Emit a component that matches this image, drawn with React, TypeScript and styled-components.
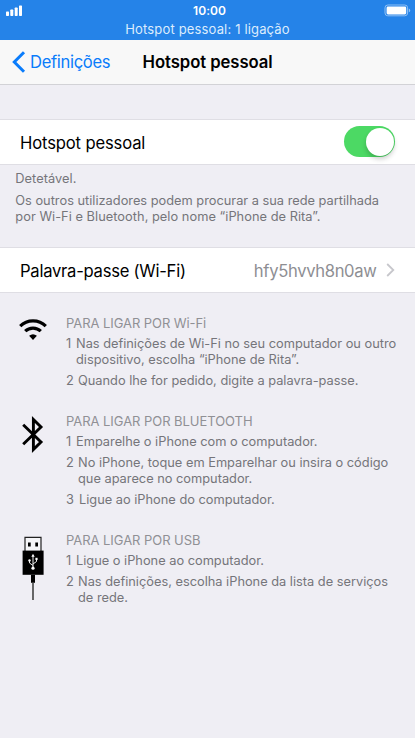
import React from 'react';
import styled, { createGlobalStyle } from 'styled-components';

const GlobalStyle = createGlobalStyle`
  * { box-sizing: border-box; }
  body { margin: 0; background: #efeef4; }
`;

const Screen = styled.div`
  width: 415px;
  height: 738px;
  overflow: hidden;
  display: flex;
  flex-direction: column;
  background: #efeef4;
  color: #000;
  font-family: Inter, 'Liberation Sans', sans-serif;
`;

const StatusBar = styled.header`
  height: 40px;
  flex: none;
  background: #2583e8;
  color: #fff;
`;

const StatusRow = styled.div`
  height: 20px;
  display: grid;
  grid-template-columns: 1fr auto 1fr;
  align-items: center;
  padding: 0 4px 0 6px;
`;

const Clock = styled.span`
  font-size: 12px;
  font-weight: 600;
  line-height: 20px;
  letter-spacing: 0.07px;
  margin-left: 2px;
  padding-top: 1px;
`;

const Signal = styled.svg`
  width: 17px;
  height: 11px;
`;

const Battery = styled.svg`
  width: 27px;
  height: 13px;
  justify-self: end;
`;

const StatusMessage = styled.div`
  height: 20px;
  line-height: 19px;
  text-align: center;
  font-size: 13px;
  letter-spacing: 0.16px;
  color: #dcecfd;
`;

const NavBar = styled.nav`
  height: 45px;
  flex: none;
  display: flex;
  align-items: center;
  padding-left: 12px;
  background: #f8f8f8;
  border-bottom: 1px solid #d2d2d6;
  font-size: 16.6px;
`;

const BackIcon = styled.svg`
  width: 14px;
  height: 22px;
  flex: none;
`;

const BackLabel = styled.a`
  width: 113px;
  margin-left: 4px;
  color: #0a7cfb;
  letter-spacing: -0.33px;
`;

const Title = styled.h1`
  margin: 0 0 0 -0.5px;
  font-size: 16.7px;
  font-weight: 600;
  letter-spacing: -0.06px;
`;

const Cell = styled.section<{ $gap: number }>`
  height: 46px;
  flex: none;
  margin-top: ${(p) => p.$gap}px;
  padding: 0 20px;
  display: flex;
  align-items: center;
  background: #fff;
  border-top: 1px solid #dfdee4;
  border-bottom: 1px solid #dfdee4;
  font-size: 16.6px;
`;

const CellLabel = styled.span<{ $tracking: number }>`
  flex: 1;
  padding-top: 1px;
  letter-spacing: ${(p) => p.$tracking}px;
`;

const CellValue = styled.span`
  padding-top: 1px;
  color: #8e8e93;
  letter-spacing: -0.33px;
`;

const Disclosure = styled.svg`
  width: 9px;
  height: 14px;
  margin-left: 9.5px;
`;

const Switch = styled.div`
  width: 51px;
  height: 31px;
  padding: 2px 1px;
  display: flex;
  justify-content: flex-end;
  border-radius: 16px;
  background: #4cd964;
  margin-top: -1px;
`;

const Knob = styled.div`
  width: 28px;
  height: 28px;
  margin-top: -0.5px;
  border-radius: 50%;
  background: #fff;
  box-shadow: 0 3px 5px rgba(0, 0, 0, 0.2);
`;

const Notes = styled.div`
  height: 82px;
  flex: none;
  padding: 5px 0 0 15.3px;
  display: flex;
  flex-direction: column;
  gap: 6px;
`;

const Line = styled.span<{ $tracking?: number }>`
  display: block;
  height: 16px;
  line-height: 17.4px;
  white-space: nowrap;
  font-size: 12.8px;
  color: #75757a;
  letter-spacing: ${(p) => p.$tracking ?? 0}px;
`;

const Guides = styled.main`
  padding: 22px 0 0;
  display: flex;
  flex-direction: column;
  gap: 25px;
`;

const Guide = styled.section`
  display: grid;
  grid-template-columns: 66px 1fr;
  align-items: start;
`;

const GuideIcon = styled.svg<{ $top: number }>`
  margin: ${(p) => p.$top}px auto 0;
  overflow: visible;
`;

const GuideHeading = styled.h2<{ $tracking: number; $gap: number }>`
  margin: 0 0 ${(p) => p.$gap}px;
  height: 16px;
  font-size: 13px;
  line-height: 16px;
  font-weight: 400;
  color: #909095;
  letter-spacing: ${(p) => p.$tracking}px;
`;

const Steps = styled.ol`
  margin: 0;
  padding: 0;
  list-style: none;
  display: flex;
  flex-direction: column;
  gap: 5px;
`;

const Step = styled.li<{ $indent: number }>`
  display: grid;
  grid-template-columns: ${(p) => p.$indent}px 1fr;
`;

interface StepData {
  indent: number;
  lines: string[];
}

interface GuideData {
  heading: string;
  tracking: number;
  gap: number;
  icon: React.ReactNode;
  steps: StepData[];
}

const wifiIcon = (
  <GuideIcon $top={4} width="28" height="21" viewBox="0 0 28 21" fill="none" stroke="#000">
    <path d="M1.2 7.2C8.2 .2 19.8 .2 26.8 7.2" strokeWidth="3.2" />
    <path d="M6.2 12.2C10.5 8 17.5 8 21.8 12.2" strokeWidth="3.2" />
    <path d="M14 20.9 10.1 16.8Q14 13.6 17.9 16.8Z" fill="#000" stroke="none" />
  </GuideIcon>
);

const bluetoothIcon = (
  <GuideIcon $top={3} width="22" height="37" viewBox="0 0 22 37" fill="none" stroke="#000">
    <path d="M1.2 8.8 19 26 11.4 33.5V3.5L19 11 1.2 28.3" strokeWidth="2.9" />
  </GuideIcon>
);

const usbIcon = (
  <GuideIcon $top={4} width="22" height="64" viewBox="0 0 22 64">
    <path d="M3 15V1.3H19V15" fill="#f5f5f8" stroke="#222" strokeWidth="1.2" />
    <path d="M6 6.5H8.7V10.5H6ZM13.3 6.5H16V10.5H13.3Z" />
    <path d="M.6 14.6H21.6V38.8H.6Z" />
    <path d="M9 38.8H13V46.8H9Z" />
    <path d="M10.2 46.5H11.8V64H10.2Z" fill="#444" />
    <g fill="none" stroke="#eee" strokeWidth="1">
      <path d="M11 20V32M11 29.5 7.5 27V24.5M11 28 14.5 25.5V23" />
    </g>
    <g fill="#fff">
      <path d="M11 17.8 12.7 20.8H9.3Z" />
      <circle cx="11" cy="32.2" r="1.6" />
      <circle cx="7.5" cy="24.4" r="1.2" />
      <path d="M13.4 21.8H15.6V24H13.4Z" />
    </g>
  </GuideIcon>
);

const guides: GuideData[] = [
  {
    heading: 'PARA LIGAR POR Wi-Fi',
    tracking: -0.07,
    gap: 4,
    icon: wifiIcon,
    steps: [
      {
        indent: 10,
        lines: [
          'Nas definições de Wi-Fi no seu computador ou outro',
          'dispositivo, escolha “iPhone de Rita”.',
        ],
      },
      { indent: 12, lines: ['Quando lhe for pedido, digite a palavra-passe.'] },
    ],
  },
  {
    heading: 'PARA LIGAR POR BLUETOOTH',
    tracking: -0.05,
    gap: 4,
    icon: bluetoothIcon,
    steps: [
      { indent: 10, lines: ['Emparelhe o iPhone com o computador.'] },
      {
        indent: 12,
        lines: [
          'No iPhone, toque em Emparelhar ou insira o código',
          'que aparece no computador.',
        ],
      },
      { indent: 13, lines: ['Ligue ao iPhone do computador.'] },
    ],
  },
  {
    heading: 'PARA LIGAR POR USB',
    tracking: -0.05,
    gap: 4,
    icon: usbIcon,
    steps: [
      { indent: 10, lines: ['Ligue o iPhone ao computador.'] },
      {
        indent: 12,
        lines: [
          'Nas definições, escolha iPhone da lista de serviços',
          'de rede.',
        ],
      },
    ],
  },
];

export default function App() {
  return (
    <Screen>
      <GlobalStyle />
      <StatusBar>
        <StatusRow>
          <Signal viewBox="0 0 17 11" fill="#fff">
            <rect x="0" y="6.6" width="3" height="4.4" rx=".7" />
            <rect x="4.3" y="4.6" width="3" height="6.4" rx=".7" />
            <rect x="8.7" y="2.6" width="3" height="8.4" rx=".7" />
            <rect x="13" y="0.4" width="3" height="10.6" rx=".7" />
          </Signal>
          <Clock>10:00</Clock>
          <Battery viewBox="0 0 27 13">
            <rect x="1" y="1" width="22.6" height="10.8" rx="2.8" fill="none" stroke="#8fc0f5" />
            <rect x="2.6" y="2.6" width="19.6" height="7.8" rx="1.4" fill="#fff" />
            <path d="M24.8 4.6Q26.2 5 26.2 6.4T24.8 8.2Z" fill="#8fc0f5" />
          </Battery>
        </StatusRow>
        <StatusMessage>Hotspot pessoal: 1 ligação</StatusMessage>
      </StatusBar>
      <NavBar>
        <BackIcon viewBox="0 0 14 22" fill="none" stroke="#0a7cfb" strokeWidth="3">
          <path d="M12 1.3 2.3 11 12 20.7" />
        </BackIcon>
        <BackLabel>Definições</BackLabel>
        <Title>Hotspot pessoal</Title>
      </NavBar>
      <Cell $gap={34}>
        <CellLabel $tracking={-0.14}>Hotspot pessoal</CellLabel>
        <Switch>
          <Knob />
        </Switch>
      </Cell>
      <Notes>
        <Line $tracking={0.05}>Detetável.</Line>
        <div>
          <Line>Os outros utilizadores podem procurar a sua rede partilhada</Line>
          <Line $tracking={0.04}>por Wi-Fi e Bluetooth, pelo nome “iPhone de Rita”.</Line>
        </div>
      </Notes>
      <Cell $gap={0}>
        <CellLabel $tracking={-0.25}>Palavra-passe (Wi-Fi)</CellLabel>
        <CellValue>hfy5hvvh8n0aw</CellValue>
        <Disclosure viewBox="0 0 9 14" fill="none" stroke="#c7c7cc" strokeWidth="1.8">
          <path d="M1.2 1 7.3 7 1.2 13" />
        </Disclosure>
      </Cell>
      <Guides>
        {guides.map((guide) => (
          <Guide key={guide.heading}>
            {guide.icon}
            <div>
              <GuideHeading $tracking={guide.tracking} $gap={guide.gap}>{guide.heading}</GuideHeading>
              <Steps>
                {guide.steps.map((step, index) => (
                  <Step key={index} $indent={step.indent}>
                    <Line>{index + 1}</Line>
                    <div>
                      {step.lines.map((text) => (
                        <Line key={text}>{text}</Line>
                      ))}
                    </div>
                  </Step>
                ))}
              </Steps>
            </div>
          </Guide>
        ))}
      </Guides>
    </Screen>
  );
}
